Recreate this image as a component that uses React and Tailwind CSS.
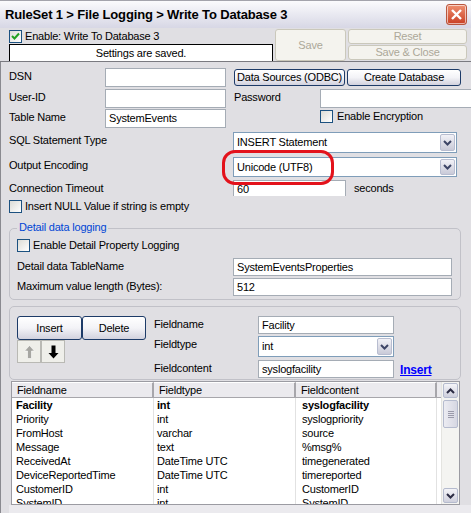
import React from "react";
import clsx from "clsx";

const rows = [
  ["Facility", "int", "syslogfacility", true],
  ["Priority", "int", "syslogpriority"],
  ["FromHost", "varchar", "source"],
  ["Message", "text", "%msg%"],
  ["ReceivedAt", "DateTime UTC", "timegenerated"],
  ["DeviceReportedTime", "DateTime UTC", "timereported"],
  ["CustomerID", "int", "CustomerID"],
  ["SystemID", "int", "SystemID"],
];

function Label({ className, children }) {
  return (
    <span className={clsx("shrink-0 whitespace-nowrap leading-[13px] pt-[2px]", className)}>
      {children}
    </span>
  );
}

function TextBox({ className, value }) {
  return (
    <div
      className={clsx(
        "flex shrink-0 items-center border border-[#a5acb5] bg-white pl-[3px] leading-[13px] whitespace-nowrap",
        className
      )}
    >
      {value}
    </div>
  );
}

function Chevron() {
  return (
    <svg width="9" height="6" viewBox="0 0 9 6">
      <path d="M1 1 L4.5 4.5 L8 1" fill="none" stroke="#3d4566" strokeWidth="2" />
    </svg>
  );
}

function Select({ className, value }) {
  return (
    <div className={clsx("flex shrink-0 items-center border border-[#7f9db9] bg-white", className)}>
      <span className="flex-1 pl-[3px] leading-[13px]">{value}</span>
      <div className="mr-[1px] flex h-[calc(100%-2px)] w-[15px] items-center justify-center rounded-[2px] border border-[#b8bdd0] bg-linear-to-b from-[#f2f2f7] to-[#c9cad8]">
        <Chevron />
      </div>
    </div>
  );
}

function Check({ checked }) {
  return (
    <div className="flex h-[13px] w-[13px] shrink-0 items-center justify-center border border-[#1c5180] bg-linear-to-br from-[#dcdcd6] to-white">
      {checked && (
        <svg width="9" height="9" viewBox="0 0 9 9">
          <path d="M1 4 L3.5 6.5 L8 1.5" fill="none" stroke="#21a121" strokeWidth="2" />
        </svg>
      )}
    </div>
  );
}

function XPButton({ className, children }) {
  return (
    <div
      className={clsx(
        "flex shrink-0 items-center justify-center whitespace-nowrap rounded-[3px] border border-[#1d3b68] bg-linear-to-b from-white via-[#f3f3f7] to-[#d2d2de] leading-[13px]",
        className
      )}
    >
      {children}
    </div>
  );
}

function DisabledButton({ className, children }) {
  return (
    <div
      className={clsx(
        "flex shrink-0 items-center justify-center rounded-[3px] border border-[#cac8bb] bg-[#f4f3ee] text-[#aca899] leading-[13px]",
        className
      )}
    >
      {children}
    </div>
  );
}

function ScrollButton({ up }) {
  return (
    <div className="mx-[1px] flex h-[15px] items-center justify-center rounded-[2px] border border-[#b5bbce] bg-linear-to-b from-[#f4f4f8] to-[#cfd0dd]">
      <svg width="9" height="6" viewBox="0 0 9 6">
        <path
          d={up ? "M1 5 L4.5 1.5 L8 5" : "M1 1 L4.5 4.5 L8 1"}
          fill="none"
          stroke="#2c2c44"
          strokeWidth="2"
        />
      </svg>
    </div>
  );
}

export default function App() {
  return (
    <div className="relative flex h-[513px] w-[471px] flex-col overflow-hidden bg-[#e0dfe3] font-['Liberation_Sans',Arial,sans-serif] text-[11px] tracking-[-0.2px] text-black">
      {/* title bar */}
      <div className="flex h-[28px] shrink-0 items-center justify-between border-t border-[#a4a4ac] bg-linear-to-b from-[#fbfbfd] to-[#d7d7e5] pl-[5px] pr-[4px]">
        <span className="text-[13px] font-bold tracking-[-0.15px]">
          RuleSet 1 &gt; File Logging &gt; Write To Database 3
        </span>
        <div className="flex h-[21px] w-[21px] items-center justify-center rounded-[3px] border border-[#b8563e] bg-linear-to-b from-[#ee8f70] to-[#c93e22] shadow-[inset_0_0_0_1px_rgba(255,255,255,0.6)]">
          <svg width="13" height="13" viewBox="0 0 13 13">
            <path d="M2 2 L11 11 M11 2 L2 11" stroke="white" strokeWidth="2.4" />
          </svg>
        </div>
      </div>

      {/* top bar */}
      <div className="flex h-[34px] shrink-0 border-b border-[#7a7a80] pl-[9px]">
        <div className="flex w-[264px] shrink-0 flex-col">
          <div className="flex h-[16px] items-center gap-[3px] pt-[1px]">
            <Check checked />
            <span className="leading-[13px]">Enable: Write To Database 3</span>
          </div>
          <div className="flex h-[17px] items-center justify-center border-x border-t border-black bg-white leading-[13px]">
            Settings are saved.
          </div>
        </div>
        <DisabledButton className="ml-[2px] mt-[1px] h-[32px] w-[71px]">Save</DisabledButton>
        <div className="ml-[2px] mt-[1px] flex w-[119px] shrink-0 flex-col gap-[1px]">
          <DisabledButton className="h-[15px]">Reset</DisabledButton>
          <DisabledButton className="h-[15px]">Save &amp; Close</DisabledButton>
        </div>
      </div>

      {/* body */}
      <div className="flex flex-1 flex-col border-l border-[#8a8a90] pl-[8px]">
        <div className="mt-[6px] flex h-[19px] items-start">
          <Label className="w-[96px]">DSN</Label>
          <TextBox className="h-[19px] w-[121px]" />
          <XPButton className="ml-[8px] mt-[1px] h-[17px] w-[111px]">Data Sources (ODBC)</XPButton>
          <XPButton className="ml-[2px] mt-[1px] h-[17px] w-[114px]">Create Database</XPButton>
        </div>
        <div className="mt-[2px] flex h-[19px] items-start">
          <Label className="w-[96px]">User-ID</Label>
          <TextBox className="h-[19px] w-[121px]" />
          <Label className="ml-[8px] w-[86px]">Password</Label>
          <TextBox className="h-[19px] w-[160px]" />
        </div>
        <div className="mt-[1px] flex h-[19px] items-start">
          <Label className="w-[96px]">Table Name</Label>
          <TextBox className="h-[19px] w-[121px]" value="SystemEvents" />
          <div className="ml-[94px] mt-[1px] flex shrink-0 items-center gap-[4px]">
            <Check />
            <span className="leading-[13px]">Enable Encryption</span>
          </div>
        </div>
        <div className="mt-[4px] flex h-[21px] items-start">
          <Label className="w-[224px]">SQL Statement Type</Label>
          <Select className="h-[21px] w-[224px]" value="INSERT Statement" />
        </div>
        <div className="mt-[4px] flex h-[20px] items-start">
          <Label className="w-[224px] pt-[1px]">Output Encoding</Label>
          <Select className="h-[20px] w-[224px]" value="Unicode (UTF8)" />
        </div>
        <div className="mt-[3px] flex h-[16px] items-start overflow-hidden">
          <Label className="w-[224px]">Connection Timeout</Label>
          <TextBox className="h-[19px] w-[113px]" value="60" />
          <Label className="ml-[8px]">seconds</Label>
        </div>
        <div className="mt-[4px] flex items-center gap-[3px]">
          <Check />
          <span className="leading-[13px]">Insert NULL Value if string is empty</span>
        </div>

        {/* detail group */}
        <div className="relative mt-[15px] w-[452px] rounded-[5px] border border-[#c1c1c8] pb-[3px] pl-[7px] pt-[10px]">
          <span className="absolute -top-[8px] left-[7px] bg-[#e0dfe3] px-[2px] leading-[13px] text-[#0046d5]">
            Detail data logging
          </span>
          <div className="flex items-center gap-[3px]">
            <Check />
            <span className="leading-[13px]">Enable Detail Property Logging</span>
          </div>
          <div className="mt-[6px] flex h-[18px] items-start">
            <Label className="w-[216px]">Detail data TableName</Label>
            <TextBox className="h-[18px] w-[219px]" value="SystemEventsProperties" />
          </div>
          <div className="mt-[2px] flex h-[18px] items-start">
            <Label className="w-[216px]">Maximum value length (Bytes):</Label>
            <TextBox className="h-[18px] w-[219px]" value="512" />
          </div>
        </div>

        {/* field editor group */}
        <div className="mt-[6px] flex h-[74px] w-[452px] rounded-[5px] border border-[#c1c1c8] pl-[7px] pt-[9px]">
          <div className="flex flex-col">
            <div className="flex">
              <XPButton className="h-[24px] w-[65px]">Insert</XPButton>
              <XPButton className="h-[24px] w-[64px]">Delete</XPButton>
            </div>
            <div className="flex">
              <div className="flex h-[23px] w-[24px] items-center justify-center border border-[#b9b9b4] bg-[#efefea]">
                <svg width="11" height="14" viewBox="0 0 11 14">
                  <path d="M5.5 0.5 L10.5 6 L7.5 6 L7.5 13.5 L3.5 13.5 L3.5 6 L0.5 6 Z" fill="#a6a6a2" stroke="#ffffff" strokeWidth="0.6" />
                </svg>
              </div>
              <div className="flex h-[23px] w-[24px] items-center justify-center border border-[#b9b9b4] bg-[#efefea]">
                <svg width="11" height="14" viewBox="0 0 11 14">
                  <path d="M3.5 0.5 L7.5 0.5 L7.5 8 L10.5 8 L5.5 13.5 L0.5 8 L3.5 8 Z" fill="#000000" />
                </svg>
              </div>
            </div>
          </div>
          <div className="ml-[8px] flex flex-col">
            <div className="flex h-[18px] items-start">
              <Label className="w-[104px]">Fieldname</Label>
              <TextBox className="h-[18px] w-[136px]" value="Facility" />
            </div>
            <div className="mt-[2px] flex h-[21px] items-start">
              <Label className="w-[104px]">Fieldtype</Label>
              <Select className="h-[21px] w-[136px]" value="int" />
            </div>
            <div className="mt-[3px] flex h-[18px] items-start">
              <Label className="w-[104px]">Fieldcontent</Label>
              <TextBox className="h-[18px] w-[136px]" value="syslogfacility" />
              <span className="ml-[6px] pt-[4px] text-[12px] font-bold leading-[13px] text-[#0000ff] underline">
                Insert
              </span>
            </div>
          </div>
        </div>

        {/* field list */}
        <div className="ml-[2px] mt-[1px] flex h-[124px] w-[449px] shrink-0 border border-[#9b9ba2] bg-white">
          <div className="flex flex-1 flex-col overflow-hidden">
            <div className="flex h-[16px] shrink-0 bg-[#ebeaee] leading-[14px]">
              {["Fieldname", "Fieldtype", "Fieldcontent"].map((h, i) => (
                <div
                  key={h}
                  className={clsx(
                    "shrink-0 border-b border-r-2 border-[#a7a6ab] border-t border-t-white pl-[5px]",
                    i === 2 ? "w-[141px]" : "w-[142px]"
                  )}
                >
                  {h}
                </div>
              ))}
              <div className="flex-1 border-b border-[#a7a6ab]" />
            </div>
            {rows.map(([a, b, c, bold]) => (
              <div key={a} className={clsx("flex h-[14px] shrink-0 leading-[14px]", bold && "font-bold")}>
                <div className="w-[142px] shrink-0 border-r border-[#e2e2e2] pl-[4px]">{a}</div>
                <div className="w-[142px] shrink-0 border-r border-[#e2e2e2] pl-[3px]">{b}</div>
                <div className="w-[141px] shrink-0 border-r border-[#e2e2e2] pl-[6px]">{c}</div>
              </div>
            ))}
          </div>
          <div className="flex w-[18px] shrink-0 flex-col border-l border-[#e4e4e0] bg-[#f4f4f1] pt-[1px]">
            <ScrollButton up />
            <div className="mx-[1px] mt-[2px] flex h-[28px] flex-col items-center justify-center gap-[1px] rounded-[2px] border border-[#b5bbce] bg-linear-to-r from-[#ececf2] to-[#d6d7e2]">
              <div className="h-px w-[6px] bg-[#9a9aaa]" />
              <div className="h-px w-[6px] bg-[#9a9aaa]" />
              <div className="h-px w-[6px] bg-[#9a9aaa]" />
              <div className="h-px w-[6px] bg-[#9a9aaa]" />
            </div>
            <div className="flex-1" />
            <ScrollButton />
            <div className="h-[1px]" />
          </div>
        </div>
        <div className="flex-1 bg-[#ebeaee]" />
      </div>

      {/* red annotation around the encoding */}
      <div className="pointer-events-none absolute left-[222px] top-[150px] h-[35px] w-[112px] rounded-[13px] border-[3px] border-[#e3121b]" />
    </div>
  );
}
